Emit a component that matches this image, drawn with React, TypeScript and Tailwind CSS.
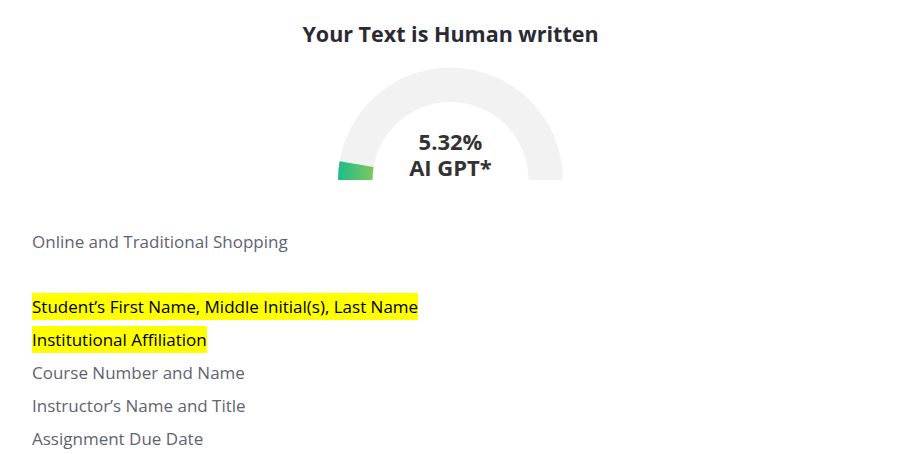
import React from "react";

const pct = 5.32;

function Gauge() {
  const cx = 112.5;
  const cy = 113;
  const R = 112.5;
  const r = 78;
  const a = (pct / 100) * Math.PI;
  const ox = cx - R * Math.cos(a);
  const oy = cy - R * Math.sin(a);
  const ix = cx - r * Math.cos(a);
  const iy = cy - r * Math.sin(a);
  return (
    <div className="relative h-[113px] w-[225px]">
      <svg width="225" height="113" viewBox="0 0 225 113">
        <defs>
          <linearGradient id="g" x1="0" x2="1" y1="0" y2="0">
            <stop offset="0" stopColor="#1dbb8c" />
            <stop offset="1" stopColor="#7ec85a" />
          </linearGradient>
        </defs>
        <path
          d={`M0 113 A112.5 112.5 0 0 1 225 113 L190.5 113 A78 78 0 0 0 34.5 113 Z`}
          fill="#f2f2f2"
        />
        <path
          d={`M0 113 A112.5 112.5 0 0 1 ${ox} ${oy} L${ix} ${iy} A78 78 0 0 0 34.5 113 Z`}
          fill="url(#g)"
        />
      </svg>
      <div className="absolute inset-x-0 top-[61px] flex flex-col items-center text-[22px] font-bold leading-[26px] text-[#333333]">
        <span>{pct}%</span>
        <span>AI GPT*</span>
      </div>
    </div>
  );
}

const lines: { text: string; mark?: boolean }[] = [
  { text: "Online and Traditional Shopping" },
  { text: "" },
  { text: "Student’s First Name, Middle Initial(s), Last Name", mark: true },
  { text: "Institutional Affiliation", mark: true },
  { text: "Course Number and Name" },
  { text: "Instructor’s Name and Title" },
  { text: "Assignment Due Date" },
];

export default function App() {
  return (
    <div className="min-h-[454px] w-[915px] bg-white font-['Open_Sans',sans-serif]">
      <div className="flex w-[901px] flex-col items-center pt-[19px]">
        <h1 className="text-[21.5px] font-bold leading-[30px] text-[#2a2a35]">Your Text is Human written</h1>
        <div className="mt-[18px]">
          <Gauge />
        </div>
      </div>
      <div className="mt-[45px] pl-[32px] text-[17px] leading-[33px] text-[#5f6372]">
        {lines.map((l, i) =>
          l.text === "" ? (
            <div key={i} className="h-[32px]" />
          ) : (
            <div key={i}>
              {l.mark ? <span className="bg-[#ffff00] py-[2px] text-black">{l.text}</span> : l.text}
            </div>
          ),
        )}
      </div>
    </div>
  );
}
